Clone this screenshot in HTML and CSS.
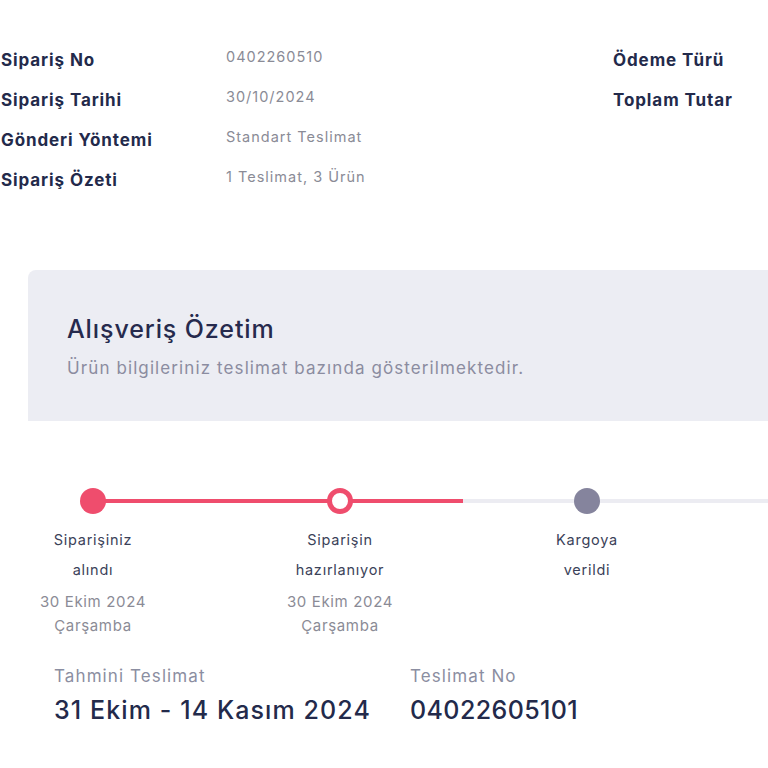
FILE: index.html
```html
<!DOCTYPE html>
<html lang="tr">
<head>
<meta charset="utf-8">
<title>Sipariş Detayı</title>
<link rel="stylesheet" href="styles.css">
</head>
<body>
<section class="info">
  <div class="label">Sipariş No</div>
  <div class="value">0402260510</div>
  <div class="label right">Ödeme Türü</div>

  <div class="label">Sipariş Tarihi</div>
  <div class="value">30/10/2024</div>
  <div class="label right">Toplam Tutar</div>

  <div class="label">Gönderi Yöntemi</div>
  <div class="value">Standart Teslimat</div>
  <div></div>

  <div class="label">Sipariş Özeti</div>
  <div class="value">1 Teslimat, 3 Ürün</div>
  <div></div>
</section>

<section class="summary">
  <div class="summary-head">
    <h2 class="summary-title">Alışveriş Özetim</h2>
    <p class="summary-sub">Ürün bilgileriniz teslimat bazında gösterilmektedir.</p>
  </div>

  <div class="steps">
    <div class="step">
      <span class="dot dot-done"></span>
      <div class="step-name">Siparişiniz<br>alındı</div>
      <div class="step-date">30 Ekim 2024<br>Çarşamba</div>
    </div>
    <div class="step">
      <span class="dot dot-current"></span>
      <div class="step-name">Siparişin<br>hazırlanıyor</div>
      <div class="step-date">30 Ekim 2024<br>Çarşamba</div>
    </div>
    <div class="step">
      <span class="dot dot-todo"></span>
      <div class="step-name">Kargoya<br>verildi</div>
    </div>
  </div>

  <div class="delivery">
    <div class="delivery-item">
      <div class="delivery-label">Tahmini Teslimat</div>
      <div class="delivery-value">31 Ekim - 14 Kasım 2024</div>
    </div>
    <div class="delivery-item">
      <div class="delivery-label">Teslimat No</div>
      <div class="delivery-value delivery-number">04022605101</div>
    </div>
  </div>
</section>
</body>
</html>
```

FILE: styles.css
```css
* { box-sizing: border-box; }

html, body {
  margin: 0;
  padding: 0;
  background: #ffffff;
  font-family: Inter, "Noto Sans", "Liberation Sans", sans-serif;
  overflow: hidden;
}

.info {
  display: grid;
  grid-template-columns: 225px 387px 1fr;
  grid-auto-rows: 40px;
  padding: 48px 0 0 1px;
}

.label {
  font-size: 17px;
  font-weight: 700;
  letter-spacing: 0.9px;
  color: #232a4b;
  line-height: 24px;
  white-space: nowrap;
}

.value {
  font-size: 14.5px;
  letter-spacing: 1px;
  color: #8a8b96;
  line-height: 18px;
  white-space: nowrap;
}

.summary {
  margin: 62px 0 0 28px;
  border-bottom: 2px solid #eeeef2;
  padding-bottom: 44px;
}

.summary-head {
  background: #ecedf3;
  border-top-left-radius: 8px;
  height: 151px;
  padding: 43px 0 0 39px;
}

.summary-title {
  margin: 0;
  font-size: 25px;
  font-weight: 500;
  letter-spacing: 0.9px;
  line-height: 32px;
  color: #262a4d;
}

.summary-sub {
  margin: 13px 0 0;
  font-size: 17px;
  letter-spacing: 1.1px;
  line-height: 20px;
  color: #8b8ca0;
  white-space: nowrap;
}

.steps {
  display: flex;
  gap: 117px;
  margin-top: 67px;
  background:
    linear-gradient(#ef4d6d, #ef4d6d) 65px 11px / 370px 4px no-repeat,
    linear-gradient(#ececf2, #ececf2) 65px 11px / 100% 4px no-repeat;
}

.step {
  width: 130px;
  flex: none;
  display: flex;
  flex-direction: column;
  align-items: center;
  text-align: center;
  white-space: nowrap;
}

.dot {
  width: 26px;
  height: 26px;
  border-radius: 50%;
  display: block;
}

.dot-done { background: #ef4d6d; }

.dot-current {
  background: #ffffff;
  border: 5px solid #ef4d6d;
}

.dot-todo { background: #85849d; }

.step-name {
  margin-top: 11px;
  font-size: 14.5px;
  letter-spacing: 0.75px;
  line-height: 30px;
  color: #3b4259;
}

.step-date {
  margin-top: 5px;
  font-size: 15px;
  letter-spacing: 0.65px;
  line-height: 24px;
  color: #8b8b96;
}

.delivery {
  display: flex;
  margin-top: 26px;
  padding-left: 26px;
}

.delivery-item { width: 356px; }

.delivery-label {
  font-size: 17px;
  letter-spacing: 1.1px;
  line-height: 24px;
  color: #8b8ea1;
}

.delivery-value {
  margin-top: 5px;
  font-size: 25px;
  font-weight: 500;
  letter-spacing: 1.1px;
  line-height: 34px;
  color: #232a4b;
  white-space: nowrap;
}

.delivery-number { letter-spacing: 0.4px; }
```
